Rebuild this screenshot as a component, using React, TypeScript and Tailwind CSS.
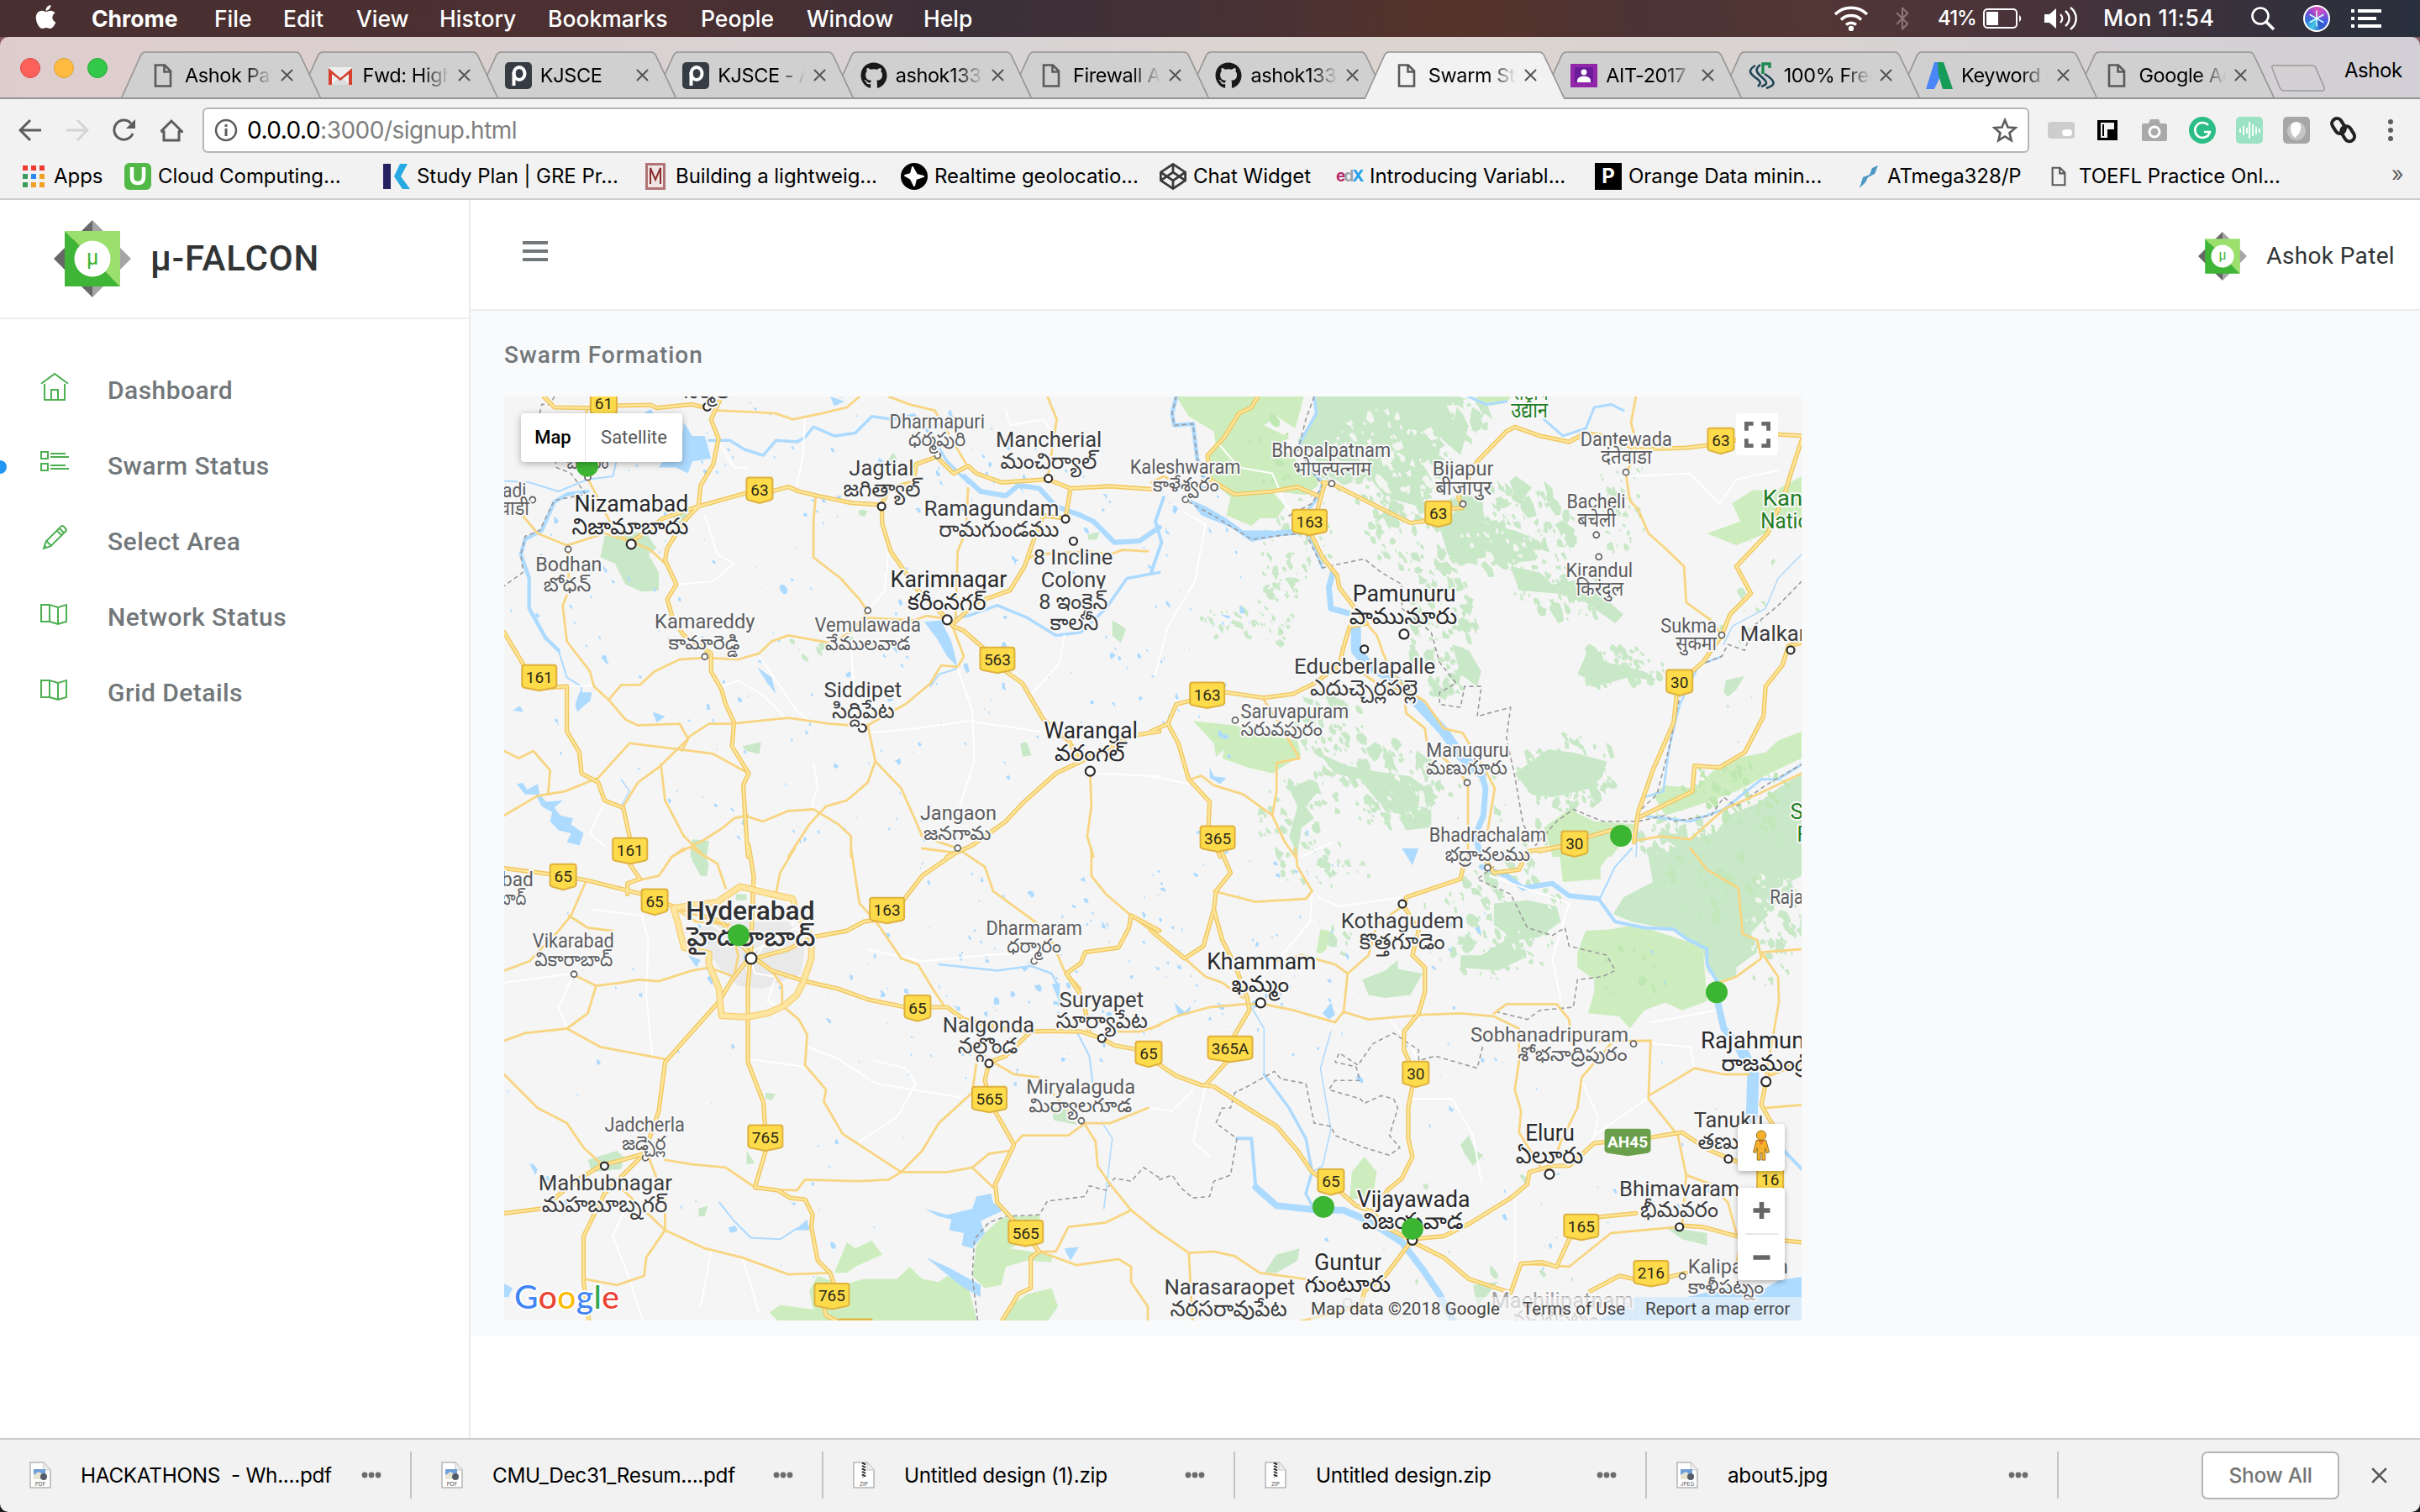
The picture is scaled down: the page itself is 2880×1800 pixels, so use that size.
import React from "react";
import { FaApple, FaGithub, FaCodepen } from "react-icons/fa";
import { TfiHome, TfiPencil, TfiMap, TfiLayoutListThumb } from "react-icons/tfi";
import { Bluetooth } from "lucide-react";

/* ---------- small icons ---------- */

const FileIcon = ({ className = "w-[22px] h-[28px]" }: { className?: string }) => (
  <svg viewBox="0 0 22 28" className={className} fill="none" stroke="#5a5a5a" strokeWidth="2.6">
    <path d="M2 1.5h11l7 7v18H2z M12.5 1.5v8h8" />
  </svg>
);

const Gmail = () => (
  <svg viewBox="0 0 32 32" className="h-8 w-8">
    <path d="M2 6h28v21H2z" fill="#eee" />
    <path d="M5 27l11-10 11 10z" fill="#ddd" />
    <path d="M2 27V7l14 12L30 7v20h-4V14L16 22 6 14v13z" fill="#d5402f" />
  </svg>
);

const ParseP = () => (
  <div className="flex h-8 w-8 items-center justify-center rounded-[5px] bg-[#353c43]">
    <svg viewBox="0 0 32 32" className="h-8 w-8" fill="none" stroke="#fff" strokeWidth="4">
      <ellipse cx="17" cy="13.500" rx="6.500" ry="7.500" />
      <path d="M10.500 12v16" />
    </svg>
  </div>
);

const Classroom = () => (
  <svg viewBox="0 0 32 32" className="h-8 w-8">
    <path d="M0 2h32v28H0z" fill="#9127a8" />
    <path d="M5 6h22v18H5z" fill="#6a1b9a" />
    <circle cx="16" cy="12" r="3.4" fill="#fff" />
    <path d="M8 22c0-7 16-7 16 0v2H8z" fill="#fff" />
  </svg>
);

const Scribble = () => (
  <svg viewBox="0 0 32 32" className="h-8 w-8" fill="none" strokeWidth="2.600">
    <path d="M8 4C-2 10 2 14 9 19s5 7 2 10" stroke="#1f4357" />
    <path d="M14 3c-8 6-4 10 3 16s4 8-2 10" stroke="#1f4357" />
    <path d="M17 14V2h8v5" stroke="#1c8a50" strokeWidth="3.400" />
    <path d="M19 14c11 7 16 13 2 17" stroke="#1f4357" />
  </svg>
);

const Ads = () => (
  <svg viewBox="0 0 32 32" className="h-8 w-8">
    <path d="M10 0h11v9L10 32H0z" fill="#4a86f7" />
    <path d="M14 0h7l11 32H20l-5-17z" fill="#169c58" />
  </svg>
);

const CloseX = ({ className = "w-[15px] h-[15px]" }: { className?: string }) => (
  <svg viewBox="0 0 16 16" className={className} stroke="#555" strokeWidth="2.2">
    <path d="M1 1l14 14M15 1L1 15" />
  </svg>
);

/* ---------- menu bar ---------- */

const menus = [
  { t: "Chrome", w: "w-[146px]", b: true },
  { t: "File", w: "w-[82px]" },
  { t: "Edit", w: "w-[87px]" },
  { t: "View", w: "w-[99px]" },
  { t: "History", w: "w-[129px]" },
  { t: "Bookmarks", w: "w-[182px]" },
  { t: "People", w: "w-[126px]" },
  { t: "Window", w: "w-[139px]" },
  { t: "Help", w: "w-[80px]" },
];

function MenuBar() {
  return (
    <div className="flex h-11 shrink-0 items-center bg-[linear-gradient(90deg,#492f30_0%,#4d3031_27%,#3b2f38_40%,#453136_50%,#56332a_60%,#4c3334_68%,#533636_75%,#48333a_84%,#282f3d_100%)] pl-[41px] pr-[46px] text-[26.5px] text-white">
      <FaApple className="mb-1 h-8 w-[27px] shrink-0" />
      <div className="ml-[41px] flex shrink-0">
        {menus.map((m) => (
          <span key={m.t} className={`${m.w} ${m.b ? "font-bold" : "font-medium"} whitespace-nowrap leading-none`}>
            {m.t}
          </span>
        ))}
      </div>
      <div className="ml-auto flex items-center">
        <svg viewBox="0 0 42 30" className="h-[30px] w-[42px]" fill="none" stroke="#fff" strokeWidth="3.4">
          <path d="M2 10a27 27 0 0 1 38 0M9 16.500a17 17 0 0 1 24 0M15 22.500a9 9 0 0 1 12 0" />
          <circle cx="21" cy="27" r="1.500" fill="#fff" />
        </svg>
        <Bluetooth className="ml-[25px] h-[32px] w-[30px] text-[#8a7576]" strokeWidth={1.7} />
        <span className="ml-[27px] w-[54px] text-[24px] font-medium tracking-[-1px]">41%</span>
        <svg viewBox="0 0 46 24" className="h-6 w-[46px]">
          <rect x="1" y="1" width="39" height="22" rx="4" fill="none" stroke="#fff" strokeWidth="2" />
          <path d="M4 4h14v16H4z" fill="#fff" />
          <path d="M43 8c3 2 3 6 0 8z" fill="#fff" />
        </svg>
        <svg viewBox="0 0 42 30" className="ml-[26px] h-[30px] w-[42px]" fill="none" stroke="#fff" strokeWidth="2.400">
          <path d="M1 10h6l8-7v24l-8-7H1z" fill="#fff" stroke="none" />
          <path d="M20 10c3 3 3 7 0 10M26 6c6 5 6 13 0 18M32 2c9 7 9 19 0 26" />
        </svg>
        <span className="ml-[29px] w-[175px] whitespace-nowrap font-medium tracking-[0.6px]">Mon 11:54</span>
        <svg viewBox="0 0 30 30" className="h-[30px] w-[30px]" fill="none" stroke="#fff" strokeWidth="2.600">
          <circle cx="12" cy="12" r="9.500" />
          <path d="M19 19l9 9" strokeWidth="3.600" />
        </svg>
        <div className="ml-[33px] flex h-8 w-8 items-center justify-center rounded-full border-2 border-white bg-[conic-gradient(#d84fb8,#b04fd0,#3f5be0,#2d59c8,#43c7e8,#2d79d8,#7a47d6,#d84fb8)]">
          <svg viewBox="0 0 20 20" className="h-6 w-6" stroke="#d9fbff" strokeWidth="1.300">
            <path d="M10 2v16M3 6l14 8M3 14L17 6" />
          </svg>
        </div>
        <svg viewBox="0 0 36 22" className="ml-[25px] h-[22px] w-[36px]" fill="#fff">
          <path d="M0 0h4v4H0zM0 9h4v4H0zM0 18h4v4H0zM8 0h28v4H8zM8 9h22v4H8zM8 18h28v4H8z" />
        </svg>
      </div>
    </div>
  );
}

/* ---------- tab strip ---------- */

const tabs: { t: string; icon: React.ReactNode; z: string; active?: boolean }[] = [
  { t: "Ashok Patel", icon: <FileIcon />, z: "z-[12]" },
  { t: "Fwd: High A", icon: <Gmail />, z: "z-[11]" },
  { t: "KJSCE", icon: <ParseP />, z: "z-[10]" },
  { t: "KJSCE - App", icon: <ParseP />, z: "z-[9]" },
  { t: "ashok1334", icon: <FaGithub className="h-8 w-8 text-[#191717]" />, z: "z-[8]" },
  { t: "Firewall Ap", icon: <FileIcon />, z: "z-[7]" },
  { t: "ashok1334", icon: <FaGithub className="h-8 w-8 text-[#191717]" />, z: "z-[6]" },
  { t: "Swarm Stat", icon: <FileIcon />, z: "z-[20]", active: true },
  { t: "AIT-2017 E", icon: <Classroom />, z: "z-[4]" },
  { t: "100% Free", icon: <Scribble />, z: "z-[3]" },
  { t: "Keyword P", icon: <Ads />, z: "z-[2]" },
  { t: "Google Ac", icon: <FileIcon />, z: "z-[1]" },
];

function TabStrip() {
  return (
    <div className="bg-[#8a5a60]">
      <div className="flex h-[74px] shrink-0 items-end rounded-t-[10px] bg-[linear-gradient(90deg,#dfcdcd_0%,#dccfcf_15%,#d8d3d5_40%,#dcd4cf_58%,#dad3d1_68%,#d2d0d6_100%)] shadow-[inset_0_-2px_0_#979595]">
        <div className="flex w-[144px] gap-4 self-center pl-6">
          <i className="h-6 w-6 rounded-full border border-[#df4744] bg-[#fc605b]" />
          <i className="h-6 w-6 rounded-full border border-[#de9f34] bg-[#fdbc40]" />
          <i className="h-6 w-6 rounded-full border border-[#27aa35] bg-[#34c84a]" />
        </div>
        {tabs.map((tab, i) => (
          <div key={i} className={`relative mr-[-26.600px] h-[57px] w-[238px] shrink-0 ${tab.z}`}>
            <svg viewBox="0 0 238 57" className="absolute inset-0 h-[57px] w-[238px]">
              <path
                d="M0 57L24 4Q26 1 29 1H208Q211 1 213 4L238 57"
                fill={tab.active ? "#f2f2f2" : "#d0d0d0"}
                stroke="#979595"
                strokeWidth="1.600"
              />
              {!tab.active && <path d="M0 56H238" stroke="#979595" strokeWidth="2" />}
            </svg>
            <div className="relative flex h-[57px] items-center pl-[32px]">
              <span className="flex w-[36px] shrink-0 justify-center">{tab.icon}</span>
              <span className="ml-[8px] w-[104px] overflow-hidden whitespace-nowrap text-[23.500px] tracking-[-0.4px] text-black [mask-image:linear-gradient(90deg,#000_68%,transparent)]">
                {tab.t}
              </span>
              <CloseX className="ml-[10px] h-[15px] w-[15px]" />
            </div>
          </div>
        ))}
        <svg viewBox="0 0 66 32" className="mb-[9px] ml-[21px] h-8 w-[66px]" fill="#d3d1d3" stroke="#9b9999" strokeWidth="1.500">
          <path d="M4 1h46q3 0 4 3l10 23q1 4-2 4H16q-3 0-5-4L2 4q-1-3 2-3z" />
        </svg>
        <span className="mb-4 ml-[22px] text-[24px] tracking-[-0.4px] text-black">Ashok</span>
      </div>
    </div>
  );
}

/* ---------- toolbar ---------- */

function Toolbar() {
  return (
    <div className="flex h-[72px] shrink-0 items-center bg-[#f2f2f2] pt-px">
      <div className="flex w-[241px] items-center gap-[28px] pl-[22px]">
        <svg viewBox="0 0 28 28" className="h-7 w-7" fill="none" stroke="#5c5c5c" strokeWidth="3">
          <path d="M27 14H3M14 2L2 14l12 12" />
        </svg>
        <svg viewBox="0 0 28 28" className="h-7 w-7" fill="none" stroke="#d4d4d4" strokeWidth="3">
          <path d="M1 14h24M14 2l12 12-12 12" />
        </svg>
        <svg viewBox="0 0 28 28" className="h-7 w-7" fill="none" stroke="#5c5c5c" strokeWidth="3">
          <path d="M24 18A11.500 11.500 0 1 1 22 6" />
          <path d="M27 1v11H16z" fill="#5c5c5c" stroke="none" />
        </svg>
        <svg viewBox="0 0 28 28" className="h-7 w-7" fill="none" stroke="#5c5c5c" strokeWidth="3">
          <path d="M5 15v11h18V15M1.500 15.500L14 3l12.500 12.500H22M1.500 15.500H6" />
        </svg>
      </div>
      <div className="flex h-[54px] w-[2174px] items-center rounded-[6px] border-2 border-[#b6b6b6] bg-white pl-[12px] pr-[12px] text-[28px] tracking-[-0.5px]">
        <svg viewBox="0 0 28 28" className="h-7 w-7" fill="none" stroke="#5c5c5c" strokeWidth="2.500">
          <circle cx="14" cy="14" r="12" />
          <path d="M14 12v9M14 7v3" strokeWidth="3" />
        </svg>
        <span className="ml-[11px] text-black">0.0.0.0</span>
        <span className="text-[#808080]">:3000/signup.html</span>
        <svg viewBox="0 0 30 30" className="ml-auto h-[30px] w-[30px]" fill="none" stroke="#5c5c5c" strokeWidth="2.600">
          <path d="M15 3l3.500 8.500 9 .7-7 6 2.200 9L15 22.500 7.300 27.200l2.200-9-7-6 9-.7z" />
        </svg>
      </div>
      <div className="flex flex-1 items-center pl-[22px]">
        <div className="flex h-[20px] w-[32px] items-end justify-end rounded-[4px] bg-[#cdcdcd] p-[3px]">
          <i className="h-[8px] w-[12px] rounded-sm bg-white" />
        </div>
        <svg viewBox="0 0 24 24" className="ml-[27px] h-6 w-6">
          <path d="M0 0h24v24H0z" />
          <path d="M4 3h16v8h-8v10H4z" fill="#f2f2f2" />
          <path d="M6 5h2v14H6z" />
        </svg>
        <svg viewBox="0 0 30 26" className="ml-[29px] h-[26px] w-[30px]">
          <path d="M2 5h6l2-5h10l2 5h6q2 0 2 2v17q0 2-2 2H2q-2 0-2-2V7q0-2 2-2z" fill="#a9a9a9" />
          <circle cx="15" cy="15" r="6" fill="none" stroke="#fff" strokeWidth="3" />
        </svg>
        <svg viewBox="0 0 32 32" className="ml-[26px] h-8 w-8">
          <circle cx="16" cy="16" r="16" fill="#2bbd86" />
          <path d="M23 10a9 9 0 1 0 2 8h-7M22 24l3-6" fill="none" stroke="#fff" strokeWidth="2.600" />
        </svg>
        <svg viewBox="0 0 32 32" className="ml-[24px] h-8 w-8" stroke="#fff" strokeWidth="1.800">
          <rect width="32" height="32" rx="5" fill="#9be2c4" stroke="none" />
          <path d="M5 14v5M9 11v11M13 13v7M16 6v20M20 9v14M24 12v9M28 14v5" />
        </svg>
        <svg viewBox="0 0 32 32" className="ml-[24px] h-8 w-8">
          <rect width="32" height="32" rx="5" fill="#a6a6a6" />
          <circle cx="16" cy="17" r="11" fill="#c5c5c5" />
          <path d="M10 9q6-6 11 0 2 9-7 16-7-6-4-16z" fill="#fff" />
        </svg>
        <svg viewBox="0 0 32 32" className="ml-[24px] h-8 w-8" fill="none" stroke="#222" strokeWidth="4">
          <rect x="4" y="1.500" width="12" height="19" rx="6" transform="rotate(-32 10 11)" />
          <rect x="15.500" y="11" width="12" height="19" rx="6" transform="rotate(-32 21 21)" />
        </svg>
        <svg viewBox="0 0 6 28" className="ml-[37px] h-7 w-[6px]" fill="#5c5c5c">
          <circle cx="3" cy="4" r="3" />
          <circle cx="3" cy="14" r="3" />
          <circle cx="3" cy="24" r="3" />
        </svg>
      </div>
    </div>
  );
}

/* ---------- bookmarks ---------- */

const bookmarks: { t: string; w: string; o: string; icon: React.ReactNode }[] = [
  {
    t: "Apps",
    w: "w-[121px]",
    o: "w-[37px]",
    icon: (
      <svg viewBox="0 0 26 26" className="h-[26px] w-[26px]">
        <path d="M0 0h6v6H0zM10 0h6v6h-6zM20 0h6v6h-6z" fill="#f23a35" />
        <path d="M0 10h6v6H0z" fill="#3b9c5d" />
        <path d="M10 10h6v6h-6z" fill="#2a8af5" />
        <path d="M20 10h6v6h-6z" fill="#f0a125" />
        <path d="M0 20h6v6H0z" fill="#3b9c5d" />
        <path d="M10 20h6v6h-6zM20 20h6v6h-6z" fill="#f0a125" />
      </svg>
    ),
  },
  {
    t: "Cloud Computing...",
    w: "w-[308px]",
    o: "w-[40px]",
    icon: (
      <svg viewBox="0 0 32 32" className="h-8 w-8">
        <rect width="32" height="32" rx="6" fill="#52b948" />
        <path d="M9 5v12q0 7 7 7t7-7V5" fill="none" stroke="#fff" strokeWidth="4.500" />
      </svg>
    ),
  },
  {
    t: "Study Plan | GRE Pr...",
    w: "w-[312px]",
    o: "w-[40px]",
    icon: (
      <svg viewBox="0 0 32 32" className="h-8 w-8">
        <path d="M0 1h9v30H0z" fill="#262262" />
        <path d="M20 1h9l-8 15 11 15h-9L13 16z" fill="#27a9e1" />
      </svg>
    ),
  },
  {
    t: "Building a lightweig...",
    w: "w-[304px]",
    o: "w-[36px]",
    icon: (
      <svg viewBox="0 0 24 32" className="h-8 w-6" fill="none" stroke="#b07474">
        <path d="M1.500 1.500h21v29h-21z" fill="#f0e4e4" strokeWidth="3" />
        <path d="M6 25V6l6 14 6-14v19" strokeWidth="2" stroke="#8c2f2f" />
      </svg>
    ),
  },
  {
    t: "Realtime geolocatio...",
    w: "w-[308px]",
    o: "w-[40px]",
    icon: (
      <svg viewBox="0 0 32 32" className="h-8 w-8">
        <circle cx="16" cy="16" r="16" />
        <path d="M14 5l5 9 8 2-9 3-2 8-4-8-7-4 7-2z" fill="#fff" stroke="#fff" strokeWidth="2" strokeLinejoin="round" />
      </svg>
    ),
  },
  { t: "Chat Widget", w: "w-[210px]", o: "w-[40px]", icon: <FaCodepen className="h-8 w-8 text-[#3a3a3a]" /> },
  {
    t: "Introducing Variabl...",
    w: "w-[308px]",
    o: "w-[40px]",
    icon: (
      <span className="text-[19px] font-bold leading-none tracking-[-2px]">
        <span className="text-[#b52a67]">e</span>
        <span className="text-[#9aa5ad]">d</span>
        <span className="text-[#1f9fe8]">X</span>
      </span>
    ),
  },
  {
    t: "Orange Data minin...",
    w: "w-[314px]",
    o: "w-[40px]",
    icon: <span className="flex h-8 w-8 items-center justify-center bg-black text-[24px] font-bold leading-none text-white">P</span>,
  },
  {
    t: "ATmega328/P",
    w: "w-[229px]",
    o: "w-[34px]",
    icon: (
      <svg viewBox="0 0 24 32" className="h-8 w-6">
        <path d="M23 3l-7 3-3 8-8 3-4 13 7-7 3-6 8-4z" fill="#4a96c4" />
      </svg>
    ),
  },
  { t: "TOEFL Practice Onl...", w: "w-[405px]", o: "w-[33px]", icon: <FileIcon className="h-6 w-[18px]" /> },
];

function Bookmarks() {
  return (
    <div className="flex h-[48px] shrink-0 items-start border-b-2 border-[#cfcfcf] bg-[#f2f2f2] pl-[27px]">
      {bookmarks.map((b) => (
        <div key={b.t} className={`flex h-[39px] shrink-0 items-center ${b.w}`}>
          <span className={`flex shrink-0 items-center ${b.o}`}>{b.icon}</span>
          <span className="whitespace-nowrap text-[24px] tracking-[-0.05px] text-black">{b.t}</span>
        </div>
      ))}
      <span className="text-[25px] leading-[34px] text-[#5c5c5c]">»</span>
    </div>
  );
}

/* ---------- app chrome ---------- */

const Logo = ({ className }: { className: string }) => (
  <svg viewBox="0 0 92 92" className={className}>
    <path d="M46 0v92L32 78 0 46 32 14z" fill="#686868" />
    <path d="M46 0v92l14-14 32-32-32-32z" fill="#a5a5a5" />
    <path d="M13 13h66v66z" fill="#9bdf6c" />
    <path d="M13 13v66h66z" fill="#3eb536" />
    <circle cx="46" cy="46" r="21.500" fill="#fff" />
    <text x="46" y="53" textAnchor="middle" fontSize="25" fontFamily="Roboto" fill="#3eb536">
      µ
    </text>
  </svg>
);

const nav = [
  { t: "Dashboard", icon: <TfiHome /> },
  { t: "Swarm Status", icon: <TfiLayoutListThumb />, active: true },
  { t: "Select Area", icon: <TfiPencil /> },
  { t: "Network Status", icon: <TfiMap /> },
  { t: "Grid Details", icon: <TfiMap /> },
];

function Sidebar() {
  return (
    <aside className="flex w-[560px] shrink-0 flex-col border-r-2 border-[#e8eaec] bg-white font-[Roboto]">
      <div className="flex h-[142px] items-center border-b-2 border-[#ebedee] pl-[64px]">
        <Logo className="h-[92px] w-[92px]" />
        <span className="ml-[23px] text-[42px] font-medium leading-none tracking-[0.9px] text-[#313435]">µ-FALCON</span>
      </div>
      <nav className="flex flex-col pt-[40px]">
        {nav.map((n) => (
          <div key={n.t} className="relative flex h-[90px] items-center pl-[48px]">
            {n.active && <i className="absolute left-[-8px] top-[38px] h-4 w-4 rounded-full bg-[#2196f3]" />}
            <span className="mb-2.5 w-[80px] text-[34px] text-[#4caf50]">{n.icon}</span>
            <span className="text-[30px] font-medium leading-none tracking-[0.45px] text-[#72777a]">{n.t}</span>
          </div>
        ))}
      </nav>
    </aside>
  );
}

/* ---------- map ---------- */

/* The drawing is split in four survey sheets, each with its own grid. */
type Sheet = "nw" | "ne" | "sw" | "se";
const sheets: Record<Sheet, { x: number; y: number; kx: number; ky: number }> = {
  nw: { x: 0, y: -12, kx: 0.4974, ky: 0.3571 },
  ne: { x: 770, y: -12, kx: 0.4974, ky: 0.3571 },
  sw: { x: 0, y: 538, kx: 0.4974, ky: 0.3635 },
  se: { x: 770, y: 538, kx: 0.4974, ky: 0.3635 },
};
const px = (s: Sheet, x: number) => sheets[s].x + x * sheets[s].kx;
const py = (s: Sheet, y: number) => sheets[s].y + y * sheets[s].ky;

const toPath = (s: Sheet, pts: string, close = false) =>
  "M" +
  pts
    .split(" ")
    .map((p) => {
      const [x, y] = p.split(",").map(Number);
      return `${px(s, x).toFixed(1)} ${py(s, y).toFixed(1)}`;
    })
    .join("L") +
  (close ? "Z" : "");

const forestLight: [Sheet, string][] = [
  ["ne", "60,34 90,100 150,150 155,200 135,240 140,310 190,370 180,430 240,465 260,440 300,440 320,400 290,350 370,362 400,330 395,270 350,250 310,200 330,170 270,130 300,100 345,140 365,34"],
  ["ne", "100,1115 200,1130 260,1160 350,1180 358,1230 290,1290 230,1270 170,1240 175,1210 155,1235 150,1190"],
  ["ne", "1200,1360 1230,1330 1300,1340 1370,1250 1400,1240 1470,1220 1500,1180 1556,1150 1556,1240 1480,1290 1400,1350 1300,1400 1230,1430"],
  ["ne", "1556,300 1490,350 1440,345 1390,390 1410,450 1330,490 1400,530 1470,490 1500,440 1556,440"],
  ["ne", "940,1470 1000,1410 1060,1450 1165,1460 1100,1568 960,1568"],
  ["se", "1040,270 1100,265 1160,250 1250,290 1320,320 1330,500 1270,530 1230,505 1180,530 1145,590 1120,550 1045,540 1060,470 1060,430 1020,390 1020,340"],
  ["se", "975,0 1110,0 1075,60 1075,100 985,110 980,50"],
  ["se", "480,1060 510,1010 540,1060 530,1140 475,1150"],
  ["se", "395,340 405,265 425,270 420,330 405,345"],
  ["sw", "750,1400 810,1430 860,1410 940,1410 970,1370 1000,1410 1040,1420 1060,1400 1110,1430 1135,1568 670,1568 635,1520 660,1495 740,1510 730,1450"],
  ["sw", "1150,1260 1190,1210 1280,1200 1290,1260 1210,1310 1310,1330 1310,1355 1250,1350 1200,1370 1190,1430 1150,1440 1120,1400 1130,1300"],
  ["sw", "1210,1500 1250,1460 1310,1440 1325,1500 1290,1568 1180,1568"],
  ["sw", "790,1390 820,1290 840,1310 880,1285 905,1330 840,1370 820,1390"],
  ["ne", "780,34 860,34 850,55 810,65"],
];

const forestDark: [Sheet, string][] = [
  ["ne", "395,34 640,34 760,40 700,60 700,110 650,150 690,210 650,260 680,330 640,400 560,370 520,300 460,330 420,290 380,220 350,180 390,110"],
  ["ne", "640,34 700,34 720,110 760,130 740,230 700,180 660,120"],
  ["ne", "690,470 720,440 740,360 790,380 800,460 870,480 940,520 920,580 860,590 790,570 740,600 710,560"],
  ["ne", "860,600 930,620 960,660 1040,640 1080,700 1130,760 1110,790 1040,720 970,690 880,680"],
  ["ne", "400,1220 460,1260 520,1280 620,1300 670,1350 670,1470 610,1480 590,1430 540,1380 500,1310 440,1290"],
  ["ne", "330,1340 380,1310 400,1350 370,1400 390,1440 360,1470 350,1560 330,1500 350,1400"],
  ["ne", "950,1210 1010,1220 1090,1250 1080,1300 1050,1340 960,1370 910,1360 870,1290"],
  ["ne", "1045,880 1090,920 1180,950 1210,980 1140,970 1080,995 1020,960"],
  ["ne", "1370,1020 1375,980 1420,965 1400,1010 1380,1035"],
  ["ne", "1556,1290 1500,1340 1450,1390 1380,1430 1350,1490 1290,1510 1200,1580 1556,1580"],
  ["ne", "720,860 760,880 790,950 780,1000 740,960"],
  ["se", "1290,-10 1556,-10 1556,90 1500,130 1490,200 1440,270 1450,340 1400,390 1400,420 1360,440 1330,400 1320,330 1260,270 1150,240 1105,215 1130,160 1200,110 1190,30"],
  ["se", "820,180 900,170 970,190 980,240 930,290 880,300 890,360 830,400 740,390 740,350 790,350 860,290 820,250"],
  ["se", "505,430 560,400 590,365 590,395 650,410 620,480 560,490 520,480"],
  ["se", "270,1390 300,1330 355,1310 350,1350 300,1390"],
  ["se", "740,970 760,940 775,990 795,1005 770,1040 750,1000"],
  ["se", "770,1430 830,1420 800,1470 780,1500"],
  ["se", "1230,1240 1330,1260 1330,1300 1270,1280"],
  ["nw", "240,500 280,480 340,490 365,540 345,560 370,620 370,680 330,685 290,660 265,590 230,570"],
  ["nw", "400,430 435,410 440,450 420,460"],
  ["nw", "1455,780 1480,800 1488,810 1475,855 1455,830"],
  ["nw", "1235,1190 1250,1185 1262,1230 1240,1235"],
  ["nw", "570,1200 615,1185 610,1225 580,1215"],
  ["nw", "915,250 932,220 940,245 922,262"],
  ["nw", "850,410 870,415 862,435 848,428"],
  ["nw", "1395,495 1425,485 1418,510 1398,512"],
  ["nw", "450,1510 490,1515 485,1568 445,1568"],
  ["sw", "445,0 470,0 490,50 485,90 470,90 450,40"],
  ["sw", "200,1020 270,990 285,1010 280,1050 210,1060"],
  ["sw", "1310,850 1350,850 1370,905 1315,890"],
  ["sw", "555,150 580,150 580,170 555,170"],
  ["sw", "625,800 650,805 640,825 625,820"],
  ["sw", "580,990 600,1030 580,1035"],
  ["sw", "465,1180 487,1170 480,1205 465,1205"],
];

const lakes: [Sheet, string][] = [
  ["nw", "430,120 450,165 480,165 495,240 450,250 440,290 410,270 370,270 390,230 400,190 425,180"],
  ["nw", "335,90 350,75 360,95"],
  ["nw", "1005,785 1045,780 1070,850 1085,935 1060,900 1035,840"],
  ["nw", "30,1325 45,1322 55,1345 80,1325 85,1360 100,1385 140,1380 120,1405 135,1430 165,1440 160,1460 190,1490 180,1530 150,1520 160,1490 130,1480 110,1450 115,1420 90,1400 75,1360 50,1360"],
  ["nw", "180,1020 210,1020 205,1050 195,1060 175,1085 170,1060"],
  ["nw", "355,1085 385,1100 365,1120"],
  ["nw", "605,935 640,970 650,1025 630,990"],
  ["nw", "780,34 815,50 790,65"],
  ["nw", "20,1080 38,1065 46,1085"],
  ["ne", "90,375 130,400 180,440 220,480 290,480 320,495 240,518 190,470 120,430"],
  ["ne", "140,1270 150,1300 180,1305 165,1325 140,1305"],
  ["ne", "165,760 190,765 185,775"],
  ["sw", "1005,1180 1060,1200 1120,1180 1130,1140 1165,1130 1170,1160 1195,1185 1140,1220 1150,1260 1120,1310 1095,1300 1100,1260 1065,1250 1070,1215 1040,1205"],
  ["sw", "1010,1340 1060,1370 1140,1430 1140,1470 1090,1430"],
  ["sw", "1340,1310 1375,1305 1355,1350"],
  ["sw", "440,350 470,365 460,390"],
  ["sw", "485,425 500,405 498,450"],
  ["sw", "1310,445 1330,440 1328,500"],
  ["sw", "60,1030 80,1050 75,1070"],
  ["sw", "0,1425 20,1440 10,1470 0,1470"],
  ["sw", "695,1250 725,1215 730,1250"],
  ["se", "55,505 80,535 95,515 90,545 65,545"],
  ["se", "410,540 430,505 440,545 425,560"],
  ["se", "600,0 640,0 625,55"],
  ["se", "1070,1546 1160,1470 1280,1470 1400,1430 1470,1440 1500,1415 1570,1400 1570,1568 1060,1568"],
];

const rivers: [Sheet, number, string][] = [
  ["nw", 3.5, "490,180 540,180 575,210 620,230 650,180 700,185 720,170 740,135 790,165 840,155 880,100 930,110 980,95 1020,160 1060,250 1110,320"],
  ["nw", 6, "1100,300 1140,350 1200,365 1230,330 1280,340 1320,400 1380,430 1410,450 1460,520 1520,515 1568,470"],
  ["nw", 4.5, "200,350 150,360 120,385 90,480 50,510 40,560 60,640 60,740 100,840 130,880"],
  ["nw", 2, "130,880 150,970 185,1000 185,1030"],
  ["nw", 3.5, "1080,770 1110,765 1180,730 1250,770 1320,830 1380,820 1440,740 1490,640 1568,620"],
  ["nw", 2, "0,315 60,320 130,350 200,310 260,300 270,240 300,240"],
  ["nw", 2, "1085,940 1040,960 1020,1000"],
  ["nw", 1.5, "280,1310 300,1350 280,1400 290,1450"],
  ["ne", 5, "60,34 50,90 55,130 100,125 110,240 130,320"],
  ["ne", 7, "300,490 350,485 375,480"],
  ["ne", 3.5, "390,34 395,90 355,190 370,260 410,320 400,370 370,420 375,480 410,605"],
  ["ne", 7, "435,620 425,670 430,740 470,755"],
  ["ne", 12, "490,810 490,880 520,930 580,975 610,1020 640,1060 700,1150 740,1230 790,1290"],
  ["ne", 7, "790,1290 800,1340 795,1430 775,1500 790,1568"],
  ["ne", 4, "30,370 10,450 25,520 0,620"],
  ["ne", 3, "760,34 800,60 850,50"],
  ["ne", 3, "940,110 985,165 1040,140 1060,70 1100,60 1130,80"],
  ["ne", 2.5, "1365,900 1310,930 1265,1060 1240,1200 1225,1350 1180,1370"],
  ["ne", 3, "1170,1430 1290,1450 1370,1410 1460,1310 1500,1310 1556,1260"],
  ["ne", 1.5, "1556,560 1500,640 1470,740 1390,800 1370,860"],
  ["ne", 1.5, "1165,1440 1160,1568"],
  ["sw", 2, "515,1160 550,1220 590,1275 660,1280 700,1245 730,1240"],
  ["sw", 2.5, "1040,380 1180,400 1260,385 1310,410 1325,450"],
  ["sw", 2, "1370,600 1400,680 1410,790"],
  ["sw", 1.5, "1430,895 1455,950 1435,1180"],
  ["se", 6, "790,60 850,90 890,130 960,115 1000,155 1070,165"],
  ["se", 4, "1070,165 1110,240 1180,260 1250,265 1280,295 1330,330 1330,380 1360,450"],
  ["se", 2, "1150,0 1110,60 1075,160"],
  ["se", 8, "1355,500 1370,590 1420,660"],
  ["se", 14, "1410,650 1440,740 1437,880"],
  ["se", 4, "1500,970 1556,1050"],
  ["se", 4, "205,950 240,950 250,1110"],
  ["se", 8, "250,1110 300,1170 400,1185 460,1185 520,1220 600,1290 650,1380 690,1460 730,1568"],
  ["se", 3.5, "270,740 330,850 370,950 385,1060 370,1130 385,1170"],
  ["se", 1.5, "240,520 270,590 270,740"],
  ["se", 1.5, "430,600 405,720 430,920 410,1040 385,1060"],
];

const locals: [Sheet, string][] = [
  ["nw", "510,180 550,270 580,270"],
  ["nw", "480,430 510,560 550,590 500,650 415,660"],
  ["nw", "1200,80 1210,130 1290,110 1310,150"],
  ["nw", "720,100 715,230 700,330"],
  ["nw", "920,540 910,680 870,750"],
  ["nw", "830,860 835,980 860,1130"],
  ["nw", "610,900 650,980 700,1080 725,1110"],
  ["nw", "870,1155 990,1140 1110,1115 1280,1150"],
  ["nw", "1085,940 1120,1080 1125,1250 1090,1400"],
  ["nw", "1340,830 1330,920 1260,1030"],
  ["nw", "740,1260 750,1330 735,1410"],
  ["nw", "1420,1290 1568,1300"],
  ["nw", "150,1000 210,998"],
  ["nw", "520,1000 560,980 620,1030 670,1100"],
  ["nw", "240,1390 205,1490 240,1530"],
  ["ne", "80,420 130,460 105,650 40,800 10,960"],
  ["ne", "160,190 210,270 290,290 320,390 350,450"],
  ["ne", "1150,300 1290,290 1360,390 1400,310 1500,280"],
  ["ne", "0,1300 90,1325"],
  ["ne", "360,1568 430,1520"],
  ["sw", "0,440 160,410"],
  ["sw", "150,590 130,520 165,415"],
  ["sw", "210,200 330,220 345,300 340,480 355,690"],
  ["sw", "583,690 720,715"],
  ["sw", "725,650 800,690 890,770 1090,815"],
  ["sw", "885,695 960,720 985,770 940,880 850,960"],
  ["sw", "870,330 1000,370 1150,350 1280,340"],
  ["sw", "590,360 600,410 650,420 630,500 660,520"],
  ["sw", "490,240 590,340 700,260"],
  ["sw", "580,400 620,320 690,330"],
  ["sw", "300,1150 260,1270 300,1410 330,1540"],
  ["sw", "495,1320 470,1500"],
  ["sw", "570,1340 610,1520"],
  ["sw", "600,120 700,190 690,250"],
  ["se", "400,160 450,190 600,160"],
  ["se", "385,150 380,240 300,370"],
  ["se", "810,90 1000,180 960,360 980,500"],
  ["se", "1195,570 1350,530"],
  ["se", "625,820 720,820 770,940 790,1090"],
  ["se", "1030,760 1070,880 1050,990"],
  ["se", "1185,820 1060,940"],
  ["se", "130,780 100,960 140,1010"],
  ["se", "0,850 50,860 100,790"],
  ["se", "1200,640 1290,650 1300,720"],
  ["se", "570,560 620,640 640,700"],
  ["se", "870,1145 870,1350"],
];

const minor: [Sheet, string][] = [
  ["nw", "0,1430 80,1365 145,1350 225,1305 300,1190 420,1210 500,1225 585,1290"],
  ["nw", "0,1215 35,1240 70,1215 110,1280 105,1360"],
  ["nw", "20,390 80,490 150,530 240,490 310,520 350,545 385,590"],
  ["nw", "200,72 180,150 175,230 205,320 260,470 300,520"],
  ["nw", "153,540 155,680 140,730 150,850 205,950 215,1000 250,1045 290,1110 320,1130 420,1125 440,1175 425,1215"],
  ["nw", "250,1045 280,995 325,995 360,950 420,910 480,905"],
  ["nw", "440,1170 490,1125 545,1125 610,1115 680,1105 780,1125 830,1130 865,1140"],
  ["nw", "480,905 560,910 610,890 640,850 680,830 780,855 830,820 870,750"],
  ["nw", "510,80 590,85 650,90 690,110 760,90 820,70 850,34"],
  ["nw", "920,34 970,60 1030,80 1060,150 1110,270"],
  ["nw", "1300,34 1322,110 1300,310"],
  ["nw", "745,370 740,450 740,570 805,640 850,710 870,750"],
  ["nw", "870,772 980,780 1010,765 1060,775"],
  ["nw", "1080,780 1085,550 1105,480 1110,340"],
  ["nw", "1070,790 1100,900 1085,935 1045,930 1020,990 960,1060 920,1090 870,1130 888,1250 950,1340 985,1450 1000,1500 1085,1540"],
  ["nw", "888,1250 870,1320 820,1380 770,1400 730,1460 680,1568"],
  ["nw", "583,1435 620,1450 680,1415 740,1410 800,1460 830,1500 830,1568"],
  ["nw", "583,1430 550,1440 525,1470 480,1510 400,1568"],
  ["nw", "375,1260 385,1380 430,1500 480,1568"],
  ["nw", "285,1400 320,1320 370,1270 440,1175"],
  ["nw", "1402,1290 1405,1400 1395,1500 1410,1568"],
  ["nw", "1250,580 1270,560 1400,550 1450,560 1480,545 1540,550"],
  ["ne", "0,320 30,300 70,330"],
  ["ne", "515,790 540,830 555,890 570,940 610,1010 655,1050 700,1140 745,1155 765,1200 800,1280 822,1340 805,1480"],
  ["ne", "490,940 540,990 605,1020 610,1090 655,1140 660,1190 740,1290 758,1330 758,1568"],
  ["ne", "1136,290 1145,380 1165,410 1190,490 1230,540 1275,600 1280,720 1340,780 1365,830"],
  ["ne", "1160,34 1148,120 1165,210 1136,290"],
  ["ne", "1155,1515 1220,1500 1290,1510 1370,1410 1450,1360 1556,1290"],
  ["ne", "95,1310 120,1298 150,1330 220,1360 290,1430 320,1520 345,1568"],
  ["ne", "270,1045 300,1110 355,1240 300,1255 300,1350 290,1430"],
  ["sw", "0,400 60,370 130,270 160,220 195,110"],
  ["sw", "155,220 200,260 260,270"],
  ["sw", "0,630 50,605 150,590 200,540 220,450 280,440 320,430 370,435 450,400 490,390"],
  ["sw", "150,590 230,650 385,690"],
  ["sw", "160,410 220,450"],
  ["sw", "0,740 80,850 150,900 190,980 230,1030"],
  ["sw", "385,1020 450,1035 530,1045 600,1110"],
  ["sw", "600,1115 700,1120 720,1085 850,1090 920,1085 950,1060 810,935 765,830 770,790 720,710 725,610 705,560 665,515 665,450 640,400"],
  ["sw", "950,1060 1000,990 1040,900 1120,800 1130,700 1150,680"],
  ["sw", "950,1060 1060,1060 1120,1045 1160,1000 1210,990"],
  ["sw", "1220,970 1240,940 1350,940 1390,900 1450,900 1540,850"],
  ["sw", "1120,1045 1170,1110"],
  ["sw", "1390,905 1415,960 1420,1040 1450,1100 1500,1185 1568,1260"],
  ["sw", "1500,1185 1440,1225 1350,1240 1320,1320 1280,1320 1370,1365 1470,1345 1500,1370 1500,1420 1540,1500 1540,1568"],
  ["sw", "1170,700 1220,740 1280,750 1330,830 1375,890"],
  ["sw", "830,0 850,180 890,240 950,360 990,380 1030,470 1050,510"],
  ["sw", "345,1010 385,1150 385,1250 340,1340 335,1400 270,1430 190,1410"],
  ["sw", "270,1100 385,1250 480,1310 570,1340 680,1395 780,1390"],
  ["sw", "1095,10 1150,60 1170,140 1240,210 1300,270 1340,400 1380,460"],
  ["sw", "1405,0 1405,90 1440,150 1500,220 1568,290"],
  ["sw", "695,0 660,80 650,150"],
  ["sw", "450,0 510,50 530,130"],
  ["sw", "300,110 370,90 400,30 430,0"],
  ["sw", "1000,0 1085,15"],
  ["sw", "1450,600 1520,600 1568,580"],
  ["sw", "490,390 550,420 560,350 540,250 460,240 405,195"],
  ["se", "150,140 250,175 370,165 385,140 350,60 345,0"],
  ["se", "0,590 60,550 140,520 225,510 270,510 340,530 440,570 460,535 520,560 650,545 740,540 820,550 880,590 880,700 870,790 885,860 880,930 930,1040"],
  ["se", "820,540 850,510 970,510 1000,560 1005,640"],
  ["se", "600,190 540,250 520,350 470,410 460,540"],
  ["se", "80,360 130,420 170,440 220,490"],
  ["se", "1195,630 1190,820 1260,940 1280,1070 1270,1240"],
  ["se", "1100,640 1030,750 1020,850 980,960 960,1040"],
  ["se", "1195,630 1050,632"],
  ["se", "1190,810 1240,770 1300,720 1370,740 1430,740"],
  ["se", "300,370 360,350 440,380 470,410"],
  ["se", "1260,1240 1100,1260 1000,1370 890,1360"],
  ["se", "0,1240 90,1325 100,1568"],
  ["se", "90,1325 150,1320 200,1335 260,1390 420,1420"],
  ["se", "1290,0 1330,70 1405,130 1415,280 1450,300 1460,360 1400,420 1360,440"],
  ["se", "1471,740 1490,600 1502,500 1500,420 1460,340 1556,330"],
  ["se", "1470,850 1556,840"],
  ["se", "1280,1070 1340,1100 1380,1160 1400,1260"],
  ["se", "300,1568 500,1500"],
  ["se", "1400,1360 1410,1290"],
];

const major: [Sheet, string][] = [
  ["nw", "95,34 120,70 200,72 240,65 350,62 365,72 450,60 485,72"],
  ["nw", "520,34 495,110 513,175 500,260 470,330 465,400 430,450 390,540 385,580 412,660 390,710 405,780 430,830 495,890 495,950 520,1010 530,1060 550,1120 545,1200 585,1290 572,1330 583,1568"],
  ["nw", "304,520 380,440 465,400 580,355 640,350 680,335 705,350 750,365 830,388 903,395 905,460 925,550 990,680 1060,775 1075,800 1100,815 1145,870 1180,930 1240,990 1290,1110 1350,1180 1375,1240"],
  ["nw", "1568,1150 1500,1165 1440,1210 1320,1290 1240,1390 1200,1450 1120,1530 1060,1568"],
  ["nw", "1075,790 1130,720 1210,680 1245,600 1270,500 1290,430 1343,440 1355,340"],
  ["nw", "903,395 920,340 980,320 985,260 1035,235 1075,290 1110,265 1130,290 1190,320 1300,310 1355,340 1450,333 1568,345"],
  ["nw", "0,820 30,890 60,960 100,1005 150,1000 150,1150 180,1220 185,1290 225,1320 240,1380 285,1405 300,1500"],
  ["ne", "255,34 240,70 210,90 175,170 135,230 140,310 200,360 290,350 350,335 400,365"],
  ["ne", "410,320 432,324 540,400 620,455 650,450 700,410 745,405 735,370 780,250 850,150 870,135 930,165 1000,185 1040,155 1100,170 1160,210 1280,205 1340,195 1400,178 1500,160 1556,165"],
  ["ne", "415,325 400,400 385,500 410,570 445,630 450,670 490,745 515,790 475,800 460,870 450,930 390,990 340,1025 270,1038 180,1020 100,1045 60,1060 40,1125 65,1190 90,1310 140,1385 137,1470 165,1568"],
  ["ne", "0,1150 40,1125"],
  ["ne", "1556,180 1535,270 1515,360 1475,490 1400,600 1435,690 1385,760 1365,830 1320,920 1260,990 1250,1120 1200,1280 1165,1420 1155,1520"],
  ["ne", "1100,1480 1050,1500 990,1530 930,1550"],
  ["ne", "1556,855 1525,865 1510,930 1470,1000 1465,1100 1420,1220 1360,1270 1300,1265 1295,1350 1170,1435"],
  ["sw", "0,65 140,90 200,105 330,150 405,190 520,240 590,350 597,90 585,-10"],
  ["sw", "590,350 583,450 583,700 620,830 628,980 600,1110 655,1120 685,1145 720,1150 738,1200 735,1240 750,1350 780,1390 790,1430"],
  ["sw", "765,1500 770,1530 800,1550"],
  ["sw", "300,50 325,100 295,115 295,150"],
  ["sw", "1085,10 1000,90 955,170 920,230 860,240 820,270 740,290 680,330 600,360 640,400 720,435 800,460 870,495 960,520 1060,520 1100,560 1190,590"],
  ["sw", "1190,590 1250,600 1310,598 1380,600 1430,622 1460,645 1540,665"],
  ["sw", "580,370 545,430 515,500 450,600 385,700 370,860 335,1000 240,1130 190,1270 190,1420 205,1568"],
  ["sw", "335,1000 230,1040 170,1090 90,1180 0,1195"],
  ["sw", "1260,600 1230,640 1200,680 1160,700 1150,760 1170,850 1220,970 1175,1100 1180,1160 1240,1250 1280,1320 1260,1340 1260,1440 1230,1460 1190,1550"],
  ["sw", "1568,270 1500,220 1495,260 1470,325 1390,340 1380,375 1345,410 1385,490 1400,600"],
  ["se", "165,0 190,80 155,140 150,200 125,320 80,360 0,270"],
  ["se", "150,200 170,300 200,380 230,490 235,530 200,610 180,700 130,775"],
  ["se", "0,690 60,745 120,775 150,780 230,850 300,910 350,990 385,1060 440,1110 490,1170 530,1190 560,1240 620,1280 700,1270 760,1230 860,1145 900,1100 905,1060 960,1040 1000,1040 1060,965 1180,950 1270,930 1330,985 1390,1020 1450,1050"],
  ["se", "620,1290 560,1400 510,1450 500,1510"],
  ["se", "620,1285 700,1340 760,1410 860,1455 885,1360 935,1355 970,1370 1000,1280 1050,1210 1160,1195"],
  ["se", "1050,1450 1120,1400 1190,1420 1280,1390"],
  ["se", "750,40 740,100 610,160 605,190 640,270 625,350 655,390 655,470 640,540 605,600 605,660 630,740 615,850 615,950 625,1010 600,1080 565,1120 540,1180"],
  ["se", "1471,764 1460,840 1480,890 1500,930"],
  ["se", "800,40 820,80 880,70 900,10 990,-8"],
  ["se", "1264,1235 1320,1240 1400,1270 1556,1290"],
  ["se", "1556,700 1480,740"],
];

const ring: [Sheet, string][] = [
  ["sw", "405,195 510,175 565,125 640,150 690,165 700,210 735,290 735,360 715,440 700,480 670,515 630,540 580,552 520,548 514,460 490,380 490,345 430,325 415,240 405,195"],
];

const borders: [Sheet, string][] = [
  ["nw", "120,34 110,60 90,60 85,90 120,220 125,270 160,290 195,360 120,380 85,480 50,500 40,560 45,620 0,665"],
  ["ne", "60,34 50,90 55,130 100,125 110,240 130,340"],
  ["ne", "90,385 160,440 240,510 320,495 370,490 330,430 385,390 410,330 350,220 370,110 390,34"],
  ["ne", "370,490 410,605 440,595 510,575 550,620 600,660 600,740 670,820 690,920 730,990 690,1020 690,1060 740,1070 750,1000 790,1000 780,1100 860,1070 850,1170 870,1300 890,1460 920,1530 970,1450 1010,1410 1080,1450 1165,1450 1230,1430 1250,1450 1340,1430 1370,1370 1400,1400 1470,1330 1556,1260"],
  ["ne", "1556,650 1500,730 1440,800 1420,880 1380,860 1365,900 1310,930 1270,1000 1240,1200 1210,1360 1165,1420"],
  ["sw", "1135,1568 1120,1400 1125,1280 1160,1225 1200,1205 1280,1200 1300,1155 1390,1140 1400,1105 1440,1120 1460,1080 1500,1090 1530,1045 1575,1085"],
  ["se", "20,1085 50,1070 70,1110 100,1145 140,1140 150,1090 190,1070 205,950 155,900 170,850 190,850 200,800 230,780 295,730 310,755 370,770 390,900 430,910 440,940 510,980 570,1005 595,980 570,940 590,850 580,820 550,810 510,835 500,820 425,790 440,760 500,760 490,715 440,700 450,670 495,710 530,640 580,605 640,660 640,695 680,680 780,720 795,640"],
  ["se", "825,535 900,560 930,530 1010,520 1020,430 1080,420 1110,400 1090,350 1000,320 990,260 960,285 900,260 860,150 780,100 820,60"],
];

/* Deterministic scatter of small irregular patches inside an ellipse. */
function scatter(seed: number, s: Sheet, cx: number, cy: number, rx: number, ry: number, n: number, size: number) {
  let v = seed * 7919;
  const rnd = () => {
    v = (v * 16807) % 2147483647;
    return v / 2147483647;
  };
  let d = "";
  for (let i = 0; i < n; i++) {
    const a = rnd() * Math.PI * 2;
    const r = Math.sqrt(rnd());
    const x = px(s, cx + Math.cos(a) * r * rx);
    const y = py(s, cy + Math.sin(a) * r * ry);
    const k = size * (0.3 + rnd() * rnd() * 1.4);
    const count = 7;
    for (let j = 0; j < count; j++) {
      const b = (j / count) * Math.PI * 2;
      const q = k * (0.3 + rnd() * 0.95);
      d += `${j ? "L" : "M"}${(x + Math.cos(b) * q * 0.8 + Math.sin(b) * q * 0.3).toFixed(1)} ${(y + Math.sin(b) * q * 1.1).toFixed(1)}`;
    }
    d += "Z";
  }
  return d;
}

const woods = [
  scatter(11, "ne", 560, 240, 160, 200, 150, 10),
  scatter(12, "ne", 860, 480, 160, 150, 130, 9),
  scatter(13, "ne", 640, 480, 140, 140, 90, 6.5),
  scatter(14, "ne", 1000, 690, 130, 90, 70, 7),
  scatter(15, "ne", 700, 820, 80, 230, 100, 7),
  scatter(16, "ne", 300, 650, 50, 220, 70, 5.5),
  scatter(17, "ne", 200, 790, 90, 60, 28, 5),
  scatter(18, "ne", 1120, 940, 120, 70, 50, 7),
  scatter(19, "ne", 540, 1330, 160, 140, 100, 8),
  scatter(20, "ne", 1000, 1290, 120, 130, 90, 7),
  scatter(21, "ne", 1130, 380, 60, 200, 45, 5.5),
  scatter(22, "ne", 430, 1130, 90, 110, 55, 7),
  scatter(23, "ne", 330, 1440, 80, 130, 45, 7),
  scatter(24, "ne", 730, 100, 80, 80, 45, 8),
  scatter(25, "se", 860, 200, 130, 170, 80, 7),
  scatter(26, "se", 820, 350, 120, 90, 40, 6),
  scatter(27, "se", 1480, 250, 80, 200, 80, 7),
  scatter(28, "se", 420, 60, 120, 80, 30, 6),
  scatter(29, "se", 700, 250, 60, 120, 15, 5),
  scatter(30, "ne", 820, 1400, 200, 150, 30, 5),
  scatter(31, "se", 1450, 30, 130, 70, 20, 10),
  scatter(32, "ne", 380, 500, 60, 150, 25, 4.5),
  scatter(33, "ne", 1450, 850, 100, 400, 18, 4.5),
  scatter(34, "ne", 1250, 1500, 100, 70, 40, 8),
  scatter(35, "se", 440, 300, 40, 60, 8, 7),
  scatter(36, "se", 800, 1250, 300, 250, 14, 5),
  scatter(37, "nw", 750, 860, 110, 50, 10, 5),
].join("");

const clearings = [
  scatter(51, "ne", 560, 240, 130, 170, 70, 6),
  scatter(52, "ne", 850, 500, 120, 100, 30, 5),
  scatter(53, "se", 880, 250, 100, 120, 14, 4),
  scatter(54, "ne", 600, 1380, 80, 80, 18, 5),
  scatter(55, "se", 1490, 230, 70, 150, 36, 5),
].join("");

const glades = [
  scatter(61, "ne", 1400, 1330, 150, 80, 40, 7),
  scatter(62, "ne", 300, 250, 80, 160, 14, 6),
  scatter(63, "se", 1180, 400, 120, 100, 18, 5),
].join("");

const groves = [
  scatter(64, "se", 1350, 120, 140, 120, 30, 8),
  scatter(65, "ne", 1430, 1470, 120, 80, 20, 8),
].join("");

const ponds = [
  scatter(71, "nw", 780, 780, 800, 760, 210, 3.8),
  scatter(72, "sw", 1200, 400, 380, 420, 90, 3.8),
  scatter(73, "sw", 500, 760, 520, 740, 50, 3.6),
  scatter(74, "se", 250, 250, 280, 350, 70, 3.6),
  scatter(75, "ne", 120, 750, 140, 560, 40, 4),
  scatter(76, "se", 800, 800, 640, 600, 60, 3),
].join("");

type Label = [Sheet, number, number, number, string, ("s" | "m" | "l" | "xl" | "park" | "fade")?];
const labels: Label[] = [
  ["nw", 430, 540, 40, "నిర్మల్", "m"],
  ["nw", 150, 250, 275, "బాసరం", "s"],
  ["nw", 922, 1150, 140, "Dharmapuri", "s"],
  ["nw", 967, 1104, 200, "ధర్మపురి", "s"],
  ["nw", 1176, 1430, 203, "Mancherial", "m"],
  ["nw", 1187, 1418, 275, "మంచిర్యాల్", "m"],
  ["nw", 825, 980, 297, "Jagtial", "m"],
  ["nw", 811, 996, 368, "జగిత్యాల్", "m"],
  ["nw", 168, 441, 418, "Nizamabad", "l"],
  ["nw", 162, 441, 492, "నిజామాబాదు", "l"],
  ["nw", 1004, 1328, 430, "Ramagundam", "m"],
  ["nw", 1040, 1328, 500, "రామగుండము", "m"],
  ["nw", 1266, 1456, 595, "8 Incline", "m"],
  ["nw", 1284, 1440, 669, "Colony", "m"],
  ["nw", 1279, 1444, 741, "8 ఇంక్లైన్", "m"],
  ["nw", 1306, 1422, 812, "కాలనీ", "m"],
  ["nw", 924, 1203, 669, "Karimnagar", "l"],
  ["nw", 965, 1153, 745, "కరీంనగర్", "l"],
  ["nw", 75, 234, 617, "Bodhan", "s"],
  ["nw", 94, 208, 684, "బోధన్", "s"],
  ["nw", 360, 600, 806, "Kamareddy", "s"],
  ["nw", 393, 564, 876, "కామారెడ్డి", "s"],
  ["nw", 743, 997, 818, "Vemulawada", "s"],
  ["nw", 768, 972, 880, "వేములవాడ", "s"],
  ["nw", 765, 951, 1035, "Siddipet", "m"],
  ["nw", 784, 934, 1106, "సిద్దిపేట", "m"],
  ["nw", 1291, 1516, 1172, "Warangal", "l"],
  ["nw", 1317, 1485, 1250, "వరంగల్", "l"],
  ["nw", 995, 1178, 1445, "Jangaon", "s"],
  ["nw", 1003, 1165, 1512, "జనగామ", "s"],
  ["nw", -4, 53, 370, "adi", "s"],
  ["nw", -10, 60, 428, "वाडी", "s"],
  ["ne", -51, 214, 290, "Kaleshwaram", "s"],
  ["ne", 4, 162, 350, "కాళేశ్వరం", "s"],
  ["ne", 288, 573, 236, "Bhopalpatnam", "s"],
  ["ne", 340, 527, 298, "भोपल्पत्नाम", "s"],
  ["ne", 673, 819, 297, "Bijapur", "s"],
  ["ne", 680, 815, 361, "बीजापुर", "s"],
  ["ne", 1027, 1246, 198, "Dantewada", "s"],
  ["ne", 1076, 1198, 258, "दंतेवाडा", "s"],
  ["ne", 994, 1135, 407, "Bacheli", "s"],
  ["ne", 1020, 1112, 467, "बचेली", "s"],
  ["ne", 992, 1152, 637, "Kirandul", "s"],
  ["ne", 1017, 1130, 697, "किरंदुल", "s"],
  ["ne", 864, 950, 45, "राष्ट्रीय", "park"],
  ["ne", 861, 949, 105, "उद्यान", "park"],
  ["ne", 1463, 1638, 398, "Kanger", "park"],
  ["ne", 1458, 1640, 472, "National", "park"],
  ["ne", 482, 729, 717, "Pamunuru", "l"],
  ["ne", 474, 732, 792, "పామునూరు", "l"],
  ["ne", 342, 680, 957, "Educberlapalle", "m"],
  ["ne", 380, 638, 1030, "ఎదుచ్చెర్లపల్లె", "m"],
  ["ne", 214, 473, 1105, "Saruvapuram", "s"],
  ["ne", 214, 410, 1165, "సరువపురం", "s"],
  ["ne", 1219, 1353, 820, "Sukma", "s"],
  ["ne", 1255, 1353, 880, "सुकमा", "s"],
  ["ne", 1409, 1620, 848, "Malkangi", "m"],
  ["ne", 658, 856, 1234, "Manuguru", "s"],
  ["ne", 658, 852, 1295, "మణుగూరు", "s"],
  ["ne", 665, 945, 1517, "Bhadrachalam", "s"],
  ["se", 703, 907, 40, "భద్రాచలము", "s"],
  ["ne", 1529, 1590, 1443, "Sri", "park"],
  ["ne", 1545, 1600, 1517, "Fo", "park"],
  ["sw", -6, 70, 123, "bad", "s"],
  ["sw", -12, 53, 183, "బాద్", "s"],
  ["sw", 435, 743, 234, "Hyderabad", "xl"],
  ["sw", 437, 745, 318, "హైదరాబాద్", "xl"],
  ["sw", 68, 263, 325, "Vikarabad", "s"],
  ["sw", 73, 260, 386, "వికారాబాద్", "s"],
  ["sw", 1153, 1383, 283, "Dharmaram", "s"],
  ["sw", 1203, 1333, 342, "ధర్మారం", "s"],
  ["sw", 1328, 1530, 519, "Suryapet", "m"],
  ["sw", 1320, 1540, 590, "సూర్యాపేట", "m"],
  ["sw", 1049, 1269, 602, "Nalgonda", "m"],
  ["sw", 1085, 1229, 672, "నల్గొండ", "m"],
  ["sw", 1249, 1510, 802, "Miryalaguda", "s"],
  ["sw", 1255, 1502, 865, "మిర్యాలగూడ", "s"],
  ["sw", 240, 432, 926, "Jadcherla", "s"],
  ["sw", 282, 387, 988, "జడ్చెర్ల", "s"],
  ["sw", 82, 402, 1120, "Mahbubnagar", "m"],
  ["sw", 90, 391, 1190, "మహబూబ్నగర్", "m"],
  ["se", 454, 748, 261, "Kothagudem", "m"],
  ["se", 498, 703, 331, "కొత్తగూడెం", "m"],
  ["se", 133, 395, 397, "Khammam", "l"],
  ["se", 192, 330, 470, "ఖమ్మం", "l"],
  ["se", 1480, 1640, 182, "Rajavom", "s"],
  ["se", 764, 1142, 632, "Sobhanadripuram", "s"],
  ["se", 877, 1139, 697, "శోభనాద్రిపురం", "s"],
  ["se", 1315, 1640, 656, "Rajahmundry", "l"],
  ["se", 1364, 1580, 730, "రాజమండ్రి", "l"],
  ["se", 1298, 1464, 914, "Tanuku", "m"],
  ["se", 1308, 1450, 985, "తణుకు", "m"],
  ["se", 895, 1013, 958, "Eluru", "l"],
  ["se", 872, 1034, 1032, "ఏలూరు", "l"],
  ["se", 492, 763, 1174, "Vijayawada", "l"],
  ["se", 504, 747, 1247, "విజయవాడ", "l"],
  ["se", 1120, 1408, 1138, "Bhimavaram", "m"],
  ["se", 1170, 1357, 1207, "భీమవరం", "m"],
  ["se", 390, 551, 1381, "Guntur", "l"],
  ["se", 367, 573, 1452, "గుంటూరు", "l"],
  ["se", 31, 344, 1462, "Narasaraopet", "m"],
  ["se", 45, 325, 1533, "నరసరావుపేట", "m"],
  ["se", 1284, 1524, 1392, "Kalipatnam", "s"],
  ["se", 1284, 1466, 1457, "కాళీపట్నం", "s"],
  ["se", 813, 1154, 1505, "Machilipatnam", "fade"],
  ["se", 864, 1070, 1565, "మచిలీపట్నం", "fade"],
];

const labelStyle = {
  s: { size: 23.5, fill: "#5c5d61", weight: 400 },
  m: { size: 26.5, fill: "#3c3d40", weight: 400 },
  l: { size: 27, fill: "#28292c", weight: 400 },
  xl: { size: 32, fill: "#303134", weight: 500 },
  park: { size: 26, fill: "#1f7d24", weight: 400 },
  fade: { size: 26, fill: "#a0a0a2", weight: 400 },
};

const towns: [Sheet, number, number, number][] = [
  ["nw", 486, 68, 5], ["nw", 200, 303, 4], ["nw", 1037, 230, 4], ["nw", 1302, 307, 5], ["nw", 903, 400, 5], ["nw", 304, 526, 6],
  ["nw", 1343, 442, 5], ["nw", 1362, 516, 5], ["nw", 1060, 778, 6], ["nw", 153, 543, 4], ["nw", 480, 901, 4], ["nw", 870, 747, 4],
  ["nw", 857, 1139, 5], ["nw", 1402, 1283, 6], ["nw", 1085, 1539, 4], ["nw", 68, 378, 4], ["ne", 82, 377, 4], ["ne", 432, 324, 4],
  ["ne", 746, 392, 4], ["ne", 1136, 286, 4], ["ne", 1065, 495, 4], ["ne", 1071, 568, 4], ["ne", 605, 826, 6], ["ne", 510, 876, 5],
  ["ne", 201, 1113, 4], ["ne", 1365, 829, 4], ["ne", 1530, 879, 5], ["ne", 756, 1321, 4], ["se", 805, 63, 4], ["sw", 591, 360, 7],
  ["sw", 167, 412, 4], ["sw", 1268, 369, 4], ["sw", 1430, 622, 5], ["sw", 1160, 704, 5], ["sw", 1381, 892, 4], ["sw", 338, 1013, 4],
  ["sw", 240, 1040, 5], ["se", 601, 182, 5], ["se", 262, 506, 6], ["se", 1154, 640, 4], ["se", 1471, 764, 6], ["se", 1381, 1017, 5],
  ["se", 953, 1067, 6], ["se", 625, 1283, 6], ["se", 1264, 1240, 5], ["se", 1271, 1401, 4],
];

const shields: [Sheet, number, number, string][] = [
  ["nw", 238, 58, "61"], ["nw", 611, 346, "63"], ["nw", 84, 971, "161"], ["nw", 1180, 912, "563"], ["nw", 301, 1548, "161"],
  ["ne", 687, 425, "63"], ["ne", 1363, 181, "63"], ["ne", 379, 453, "163"], ["ne", 134, 1029, "163"], ["ne", 1264, 987, "30"],
  ["ne", 159, 1508, "365"], ["ne", 1013, 1525, "30"], ["sw", 141, 93, "65"], ["sw", 360, 175, "65"], ["sw", 916, 203, "163"],
  ["sw", 989, 523, "65"], ["sw", 1542, 673, "65"], ["sw", 1161, 822, "565"], ["sw", 625, 948, "765"], ["sw", 1248, 1260, "565"],
  ["sw", 784, 1466, "765"], ["sw", 840, 1583, "765"], ["se", 189, 657, "365A"], ["se", 633, 739, "30"], ["se", 430, 1092, "65"],
  ["se", 1140, 962, "AH45"], ["se", 1029, 1240, "165"], ["se", 1196, 1392, "216"], ["se", 1481, 1085, "16"],
];

const drones: [Sheet, number, number][] = [
  ["nw", 199, 265], ["ne", 1124, 1498], ["sw", 561, 284], ["se", 1353, 471], ["se", 412, 1174], ["se", 625, 1246],
];

const shieldWidth: Record<number, number> = { 2: 31, 3: 41, 4: 53 };

function Shield({ x, y, t }: { x: number; y: number; t: string }) {
  const w = shieldWidth[t.length] / 2;
  const green = t.startsWith("AH");
  return (
    <g transform={`translate(${x} ${y})`}>
      <path
        d={`M${-w + 3} ${-15}H${w - 3}Q${w} -15 ${w} -12V9Q${w} 11 ${w - 3} 12L0 15.500L${-w + 3} 12Q${-w} 11 ${-w} 9V-12Q${-w} -15 ${-w + 3} -15Z`}
        fill={green ? "#6aa04b" : "#fddb4a"}
        stroke={green ? "#6aa04b" : "#dfb13c"}
        strokeWidth="2"
      />
      <text y="6.500" textAnchor="middle" fontSize="19" fontWeight={green ? 700 : 400} fill={green ? "#fff" : "#2b2818"}>
        {t}
      </text>
    </g>
  );
}

const MapDrawing = () => (
  <svg viewBox="0 0 1544 1100" className="absolute inset-0 h-[1100px] w-[1544px] [font-family:Roboto,'Noto_Sans_Telugu','Noto_Sans',sans-serif]">
    <path d="M0 0h1544v1100H0z" fill="#f5f5f5" />
    <g fill="#c9e8c8">
      {forestDark.map(([s, p], i) => (
        <path key={i} d={toPath(s, p, true)} />
      ))}
      <path d={woods} />
    </g>
    <path d={clearings} fill="#f3f5f1" />
    <g fill="#cdedbf">
      {forestLight.map(([s, p], i) => (
        <path key={i} d={toPath(s, p, true)} />
      ))}
    </g>
    <path d={glades} fill="#bfe7b2" />
    <path d={groves} fill="#c2e7ba" />
    <path d={toPath("sw", "440,270 520,240 680,240 720,320 710,410 620,460 560,450 520,400 495,350", true)} fill="#e9e9e9" />
    <g fill="#addaff">
      {lakes.map(([s, p], i) => (
        <path key={i} d={toPath(s, p, true)} />
      ))}
      <path d={ponds} />
    </g>
    <g fill="none" strokeLinejoin="round" strokeLinecap="round">
      {rivers.map(([s, w, p], i) => (
        <path key={i} d={toPath(s, p)} stroke="#addaff" strokeWidth={w} />
      ))}
      {locals.map(([s, p], i) => (
        <path key={i} d={toPath(s, p)} stroke="#fff" strokeWidth="2" />
      ))}
      {borders.map(([s, p], i) => (
        <path key={i} d={toPath(s, p)} stroke="#9b9b9b" strokeWidth="1.600" strokeDasharray="4 5" />
      ))}
      {minor.map(([s, p], i) => (
        <path key={i} d={toPath(s, p)} stroke="#f8d581" strokeWidth="2.800" />
      ))}
      {major.map(([s, p], i) => (
        <path key={i} d={toPath(s, p)} stroke="#f1c75f" strokeWidth="5.200" />
      ))}
      {major.map(([s, p], i) => (
        <path key={i} d={toPath(s, p)} stroke="#fee69c" strokeWidth="2.400" />
      ))}
      {ring.map(([s, p], i) => (
        <g key={i}>
          <path d={toPath(s, p)} stroke="#f5cf74" strokeWidth="8" />
          <path d={toPath(s, p)} stroke="#fee5a0" strokeWidth="5.500" />
        </g>
      ))}
    </g>
    {towns.map(([s, x, y, r], i) => (
      <circle key={i} cx={px(s, x)} cy={py(s, y)} r={r - 0.5} fill="#fff" stroke={r > 4 ? "#2b2b2b" : "#666"} strokeWidth={r > 4 ? 2.2 : 1.8} />
    ))}
    <circle cx={px("se", 470)} cy={py("se", 1488)} r="5" fill="none" stroke="#bbb" strokeWidth="2" />
    {shields.map(([s, x, y, t], i) => (
      <Shield key={i} x={px(s, x)} y={py(s, y)} t={t} />
    ))}
    {labels.map(([s, x1, x2, y, t, k], i) => {
      const st = labelStyle[k ?? "s"];
      return (
        <text
          key={i}
          x={px(s, x1)}
          y={py(s, y)}
          textLength={px(s, x2) - px(s, x1)}
          lengthAdjust="spacingAndGlyphs"
          fontSize={st.size}
          fontWeight={st.weight}
          fill={st.fill}
          stroke="#f8f8f8"
          strokeWidth="4"
          strokeLinejoin="round"
          paintOrder="stroke"
        >
          {t}
        </text>
      );
    })}
    {drones.map(([s, x, y], i) => (
      <circle key={i} cx={px(s, x)} cy={py(s, y)} r="13" fill="#3cb533" />
    ))}
  </svg>
);

const letters = [
  ["G", "text-[#4285f4]"],
  ["o", "text-[#ea4335]"],
  ["o", "text-[#fbbc05]"],
  ["g", "text-[#4285f4]"],
  ["l", "text-[#34a853]"],
  ["e", "text-[#ea4335]"],
];

function SwarmMap() {
  return (
    <div className="relative h-[1100px] w-[1544px] overflow-hidden font-[Roboto]">
      <MapDrawing />
      <div className="absolute left-[20px] top-[20px] flex h-[58px] rounded-[4px] bg-white text-[22px] leading-[58px] shadow-[0_2px_8px_rgba(0,0,0,0.3)]">
        <span className="w-[76px] text-center font-medium text-black">Map</span>
        <span className="w-[116px] border-l border-[#e6e6e6] text-center text-[#565656]">Satellite</span>
      </div>
      <div className="absolute right-[28px] top-[20px] flex h-[50px] w-[50px] items-center justify-center rounded-[4px] bg-white">
        <svg viewBox="0 0 32 32" className="h-[31px] w-[31px]" fill="none" stroke="#6a6a6a" strokeWidth="5">
          <path d="M2.500 11V2.500H11M21 2.500h8.500V11M29.500 21v8.500H21M11 29.500H2.500V21" />
        </svg>
      </div>
      <div className="absolute bottom-[48px] right-[20px] flex w-[56px] flex-col gap-5">
        <div className="flex h-[56px] items-center justify-center rounded-[4px] bg-white shadow-[0_2px_6px_rgba(0,0,0,0.3)]">
          <svg viewBox="0 0 24 40" className="mb-1 h-[38px] w-6" fill="#f5b12e" stroke="#8f6a1c" strokeWidth="1">
            <path d="M6 13h12l4 15-3 1-2-6v15h-4v-9h-2v9H7V23l-2 6-3-1z" />
            <path d="M8 13h8l-4 6z" fill="#e0762a" stroke="none" />
            <circle cx="12" cy="7" r="6" />
          </svg>
        </div>
        <div className="flex h-[110px] flex-col items-center rounded-[4px] bg-white shadow-[0_2px_6px_rgba(0,0,0,0.3)]">
          <svg viewBox="0 0 22 22" className="my-[17px] h-[21px] w-[21px]" stroke="#666" strokeWidth="6">
            <path d="M11 0v22M0 11h22" />
          </svg>
          <i className="h-[2px] w-[39px] bg-[#e6e6e6]" />
          <svg viewBox="0 0 22 22" className="my-[17px] h-[21px] w-[21px]" stroke="#666" strokeWidth="6">
            <path d="M0 11h22" />
          </svg>
        </div>
      </div>
      <div className="absolute bottom-[7px] left-[12px] text-[39px] font-medium leading-[44px] tracking-[0.4px] [-webkit-text-stroke:4px_#fff] [font-family:Lato,sans-serif] [paint-order:stroke_fill]">
        {letters.map(([c, cls], i) => (
          <span key={i} className={cls}>
            {c}
          </span>
        ))}
      </div>
      <div className="absolute bottom-0 right-0 flex h-[28px] items-center bg-[rgba(245,245,245,0.62)] text-[20.500px] leading-[28px] tracking-[0.08px] text-[#444]">
        <span className="w-[252px]">Map data ©2018 Google</span>
        <span className="w-[135px]">Terms of Use</span>
        <span className="w-[197px] border-l-2 border-[#d5e9f7] pl-[9px]">Report a map error</span>
      </div>
    </div>
  );
}

/* ---------- downloads ---------- */

const downloads = [
  { t: "HACKATHONS  - Wh....pdf", k: "PDF" },
  { t: "CMU_Dec31_Resum....pdf", k: "PDF" },
  { t: "Untitled design (1).zip", k: "ZIP" },
  { t: "Untitled design.zip", k: "ZIP" },
  { t: "about5.jpg", k: "JPEG" },
];

const DocIcon = ({ kind }: { kind: string }) => (
  <svg viewBox="0 0 26 34" className="h-[34px] w-[26px]">
    <path d="M1 2h16l8 9v21H1z" fill="#fff" stroke="#b5b5b5" strokeWidth="1.500" />
    <path d="M17 2v9h8" fill="#eee" stroke="#c5c5c5" />
    {kind === "ZIP" ? (
      <path d="M12 2v18M14 3v16" stroke="#333" strokeWidth="2.500" strokeDasharray="2 1.500" />
    ) : (
      <g>
        <path d="M5 10h14v12H5z" fill="#6f9fd8" />
        <path d="M5 17l6-4 8 5v4H5z" fill="#e8e4d2" />
        <circle cx="17" cy="19" r="4" fill="#555c68" />
      </g>
    )}
    <text x="13" y="29.500" textAnchor="middle" fontSize="6.500" fontFamily="Inter" fill="#555">
      {kind}
    </text>
  </svg>
);

function Downloads() {
  return (
    <div className="bg-[#1c1c1c]">
      <div className="flex h-[88px] items-center rounded-b-[10px] border-t-2 border-[#cdcdcd] bg-[#f2f2f2] pb-[2px]">
        {downloads.map((d) => (
          <div key={d.t} className="flex h-[56px] w-[490px] shrink-0 items-center border-r-2 border-[#c4c4c4] pl-[35px]">
            <DocIcon kind={d.k} />
            <span className="ml-[35px] w-[334px] whitespace-pre text-[24.300px] tracking-[-0.3px] text-black">{d.t}</span>
            <svg viewBox="0 0 24 8" className="h-2 w-6" fill="#6c6c6c">
              <circle cx="4" cy="4" r="3.400" />
              <circle cx="12" cy="4" r="3.400" />
              <circle cx="20" cy="4" r="3.400" />
            </svg>
          </div>
        ))}
        <div className="ml-[170px] flex h-[57px] w-[164px] items-center justify-center rounded-[7px] border-2 border-[#b5b5b5] bg-white text-[24.500px] font-medium tracking-[-0.3px] text-[#757575]">
          Show All
        </div>
        <CloseX className="ml-[38px] h-[19px] w-[19px]" />
      </div>
    </div>
  );
}

export default function App() {
  return (
    <div className="flex h-[1800px] w-[2880px] flex-col overflow-hidden bg-white font-[Inter]">
      <MenuBar />
      <TabStrip />
      <Toolbar />
      <Bookmarks />
      <div className="flex flex-1">
        <Sidebar />
        <main className="flex flex-1 flex-col font-[Roboto]">
          <header className="flex h-[132px] items-center justify-between border-b-2 border-[#ebedee] pl-[62px] pr-[30px] pt-[3px]">
            <div className="-mt-3 flex flex-col gap-[6px]">
              <i className="h-1 w-[30px] bg-[#72777a]" />
              <i className="h-1 w-[30px] bg-[#72777a]" />
              <i className="h-1 w-[30px] bg-[#72777a]" />
            </div>
            <div className="flex items-center">
              <Logo className="h-[58px] w-[58px]" />
              <span className="ml-[23px] text-[28px] leading-none tracking-[0.35px] text-[#313435]">Ashok Patel</span>
            </div>
          </header>
          <section className="h-[1220px] bg-[#f9fafc] pl-[40px] pt-[38px]">
            <h4 className="h-[64px] text-[28px] font-medium leading-[30px] tracking-[0.95px] text-[#72777a]">Swarm Formation</h4>
            <SwarmMap />
          </section>
        </main>
      </div>
      <Downloads />
    </div>
  );
}
